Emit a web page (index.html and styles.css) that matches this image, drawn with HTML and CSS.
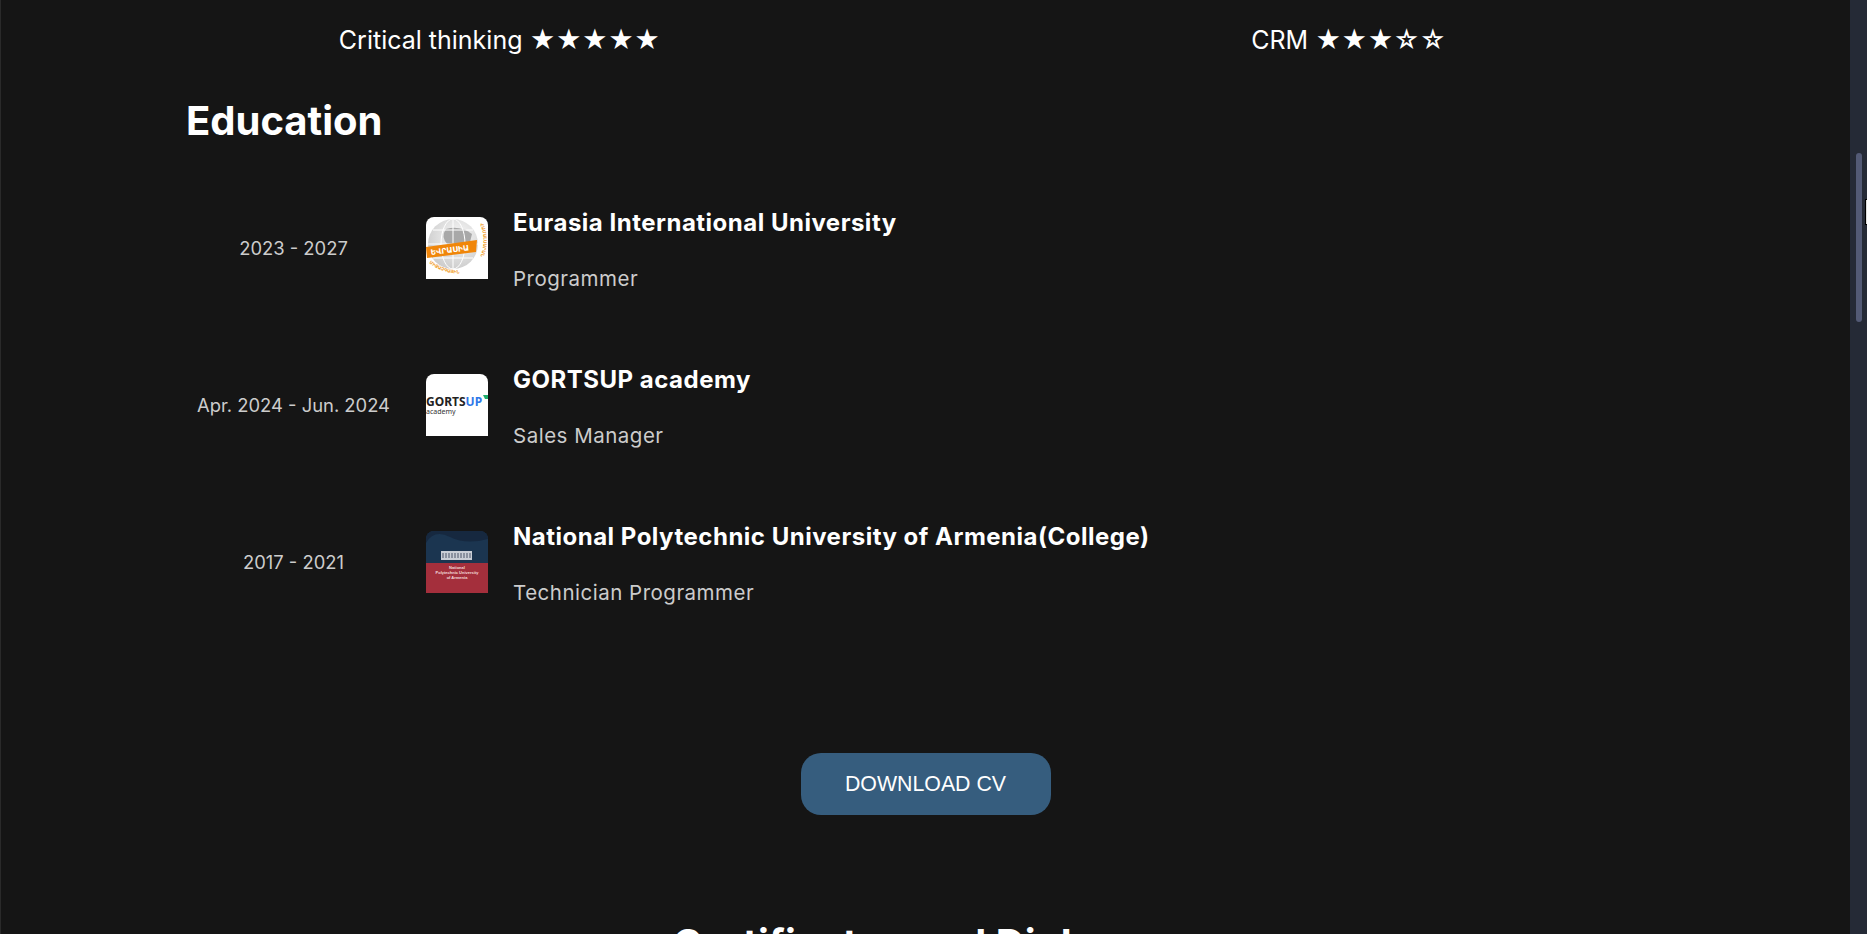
FILE: index.html
```html
<!DOCTYPE html>
<html lang="en">
<head>
    <meta charset="UTF-8">
    <meta name="viewport" content="width=device-width, initial-scale=1.0">
    <title>Resume</title>
    <link rel="stylesheet" href="styles.css">
</head>
<body>

<div class="page">
    <div class="skills">
        <div class="skill">Critical thinking ★★★★★</div>
        <div class="skill">CRM ★★★☆☆</div>
    </div>

    <div class="container">
        <h2 class="section-title">Education</h2>

        <div class="edu-row">
            <div class="edu-date">2023 - 2027</div>
            <svg class="edu-logo" viewBox="0 0 62 62">
                <defs>
                    <radialGradient id="globeFill" cx="0.6" cy="0.35" r="0.8">
                        <stop offset="0" stop-color="#f8f8f8"/>
                        <stop offset="1" stop-color="#c4c4c4"/>
                    </radialGradient>
                    <path id="arcBottom" d="M3 46 Q24 62 50 54"/>
                    <path id="arcRight" d="M54 7 Q63 28 49 50"/>
                </defs>
                <rect width="62" height="62" fill="#fff"/>
                <circle cx="27" cy="27" r="25" fill="url(#globeFill)"/>
                <path d="M20 12 Q34 8 46 17 L44 25 L22 28 Q14 20 20 12Z" fill="#a8a8a8"/>
                <ellipse cx="27" cy="27" rx="12" ry="25" fill="none" stroke="#fff"/>
                <path d="M2 27h50M7 13h40M7 41h40M27 2v50" stroke="#fff" fill="none"/>
                <path d="M0 30 L51 23 L50 35 L1 41 Z" fill="#f0860a"/>
                <text class="logo-text-arm" x="5" y="38" transform="rotate(-7 5 38)">ԵՎՐԱՍԻԱ</text>
                <text class="logo-text-arc"><textPath href="#arcBottom">ՄԻՋԱԶԳԱՅԻՆ</textPath></text>
                <text class="logo-text-arc"><textPath href="#arcRight">ՀԱՄԱԼՍԱՐԱՆ</textPath></text>
            </svg>
            <div class="edu-info">
                <h3>Eurasia International University</h3>
                <p>Programmer</p>
            </div>
        </div>

        <div class="edu-row">
            <div class="edu-date">Apr. 2024 - Jun. 2024</div>
            <svg class="edu-logo" viewBox="0 0 62 62">
                <rect width="62" height="62" fill="#fff"/>
                <path d="M57 21 L62 21 L62 25 L59 25 Z" fill="#1fae6e"/>
                <text class="logo-text-gorts" x="0" y="32">GORTS<tspan fill="#2f78e8">UP</tspan></text>
                <text class="logo-text-small" x="0" y="40">academy</text>
            </svg>
            <div class="edu-info">
                <h3>GORTSUP academy</h3>
                <p>Sales Manager</p>
            </div>
        </div>

        <div class="edu-row">
            <div class="edu-date">2017 - 2021</div>
            <svg class="edu-logo" viewBox="0 0 62 62">
                <rect width="62" height="33" fill="#1b3550"/>
                <path d="M0 0h62v8Q40 14 24 6T0 12Z" fill="#16283f"/>
                <rect y="32" width="62" height="30" fill="#a42f3c"/>
                <rect x="15" y="20" width="31" height="9" fill="#c9ced6"/>
                <path d="M17 22v5M20 22v5M23 22v5M26 22v5M29 22v5M32 22v5M35 22v5M38 22v5M41 22v5M44 22v5" stroke="#4a5568" stroke-width="1"/>
                <text class="logo-text-nat" x="31" y="38">National</text>
                <text class="logo-text-nat" x="31" y="43">Polytechnic University</text>
                <text class="logo-text-nat" x="31" y="48">of Armenia</text>
            </svg>
            <div class="edu-info">
                <h3>National Polytechnic University of Armenia(College)</h3>
                <p>Technician Programmer</p>
            </div>
        </div>

        <div class="download">
            <a class="download-btn" href="#">DOWNLOAD CV</a>
        </div>

        <h2 class="section-title centered">Certificates and Diplomas</h2>
    </div>
</div>

<div class="scrollbar">
    <div class="scrollbar-thumb"></div>
    <div class="cursor"></div>
</div>

</body>
</html>
```

FILE: styles.css
```css
html, body {
    height: 100%;
}
body {
    margin: 0;
    height: 934px;
    overflow: hidden;
    display: flex;
    background-color: #151515;
    color: #fff;
    font-family: Inter, "Liberation Sans", sans-serif;
}
.page {
    flex: 1;
    min-width: 0;
    border-left: 1px solid #2a2a2a;
}
.skills {
    display: grid;
    grid-template-columns: 849px 849px;
    padding: 20px 0 0 74px;
    height: 60px;
    box-sizing: border-box;
}
.skill {
    font-size: 25px;
    line-height: 40px;
    text-align: center;
}
.container {
    padding: 0 0 0 185px;
}
.section-title {
    margin: 37px 0 0;
    font-size: 40px;
    line-height: 48px;
    font-weight: 700;
}
.section-title.centered {
    margin: 105px 0 0;
    text-align: center;
    padding-right: 185px;
}
.edu-row {
    display: flex;
    align-items: flex-start;
    height: 157px;
}
.section-title + .edu-row {
    margin-top: 72px;
}
.edu-date {
    width: 215px;
    padding-top: 17px;
    font-size: 18.4px;
    line-height: 28px;
    color: #ccc;
    text-align: center;
}
.edu-logo {
    width: 62px;
    height: 62px;
    margin: 0 25px 0 25px;
    border-radius: 8px 8px 0 0;
}
.edu-info h3 {
    margin: -8px 0 0;
    font-size: 24px;
    line-height: 28px;
    font-weight: 700;
    letter-spacing: 0.5px;
}
.edu-info p {
    margin: 28px 0 0;
    font-size: 20.5px;
    line-height: 28px;
    color: #ccc;
    letter-spacing: 0.5px;
}
.download {
    display: flex;
    justify-content: center;
    margin-top: 65px;
    padding-right: 185px;
}
.download-btn {
    width: 250px;
    height: 62px;
    line-height: 62px;
    border-radius: 20px;
    background-color: #365d7e;
    color: #fff;
    font-family: "Liberation Sans", Arial, sans-serif;
    font-size: 21.33px;
    text-align: center;
    text-decoration: none;
}
.logo-text-arm {
    font-family: "DejaVu Sans", sans-serif;
    font-size: 7.5px;
    font-weight: 700;
    fill: #fff;
}
.logo-text-arc {
    font-family: "DejaVu Sans", sans-serif;
    font-size: 4.5px;
    font-weight: 700;
    fill: #f0a030;
}
.logo-text-gorts {
    font-family: "Noto Sans", sans-serif;
    font-size: 12px;
    font-weight: 700;
    fill: #222;
}
.logo-text-small {
    font-family: "Noto Sans", sans-serif;
    font-size: 7px;
    fill: #333;
}
.logo-text-nat {
    font-family: "Liberation Sans", sans-serif;
    font-size: 4px;
    font-weight: 700;
    fill: #f3dcdc;
    text-anchor: middle;
}
.scrollbar {
    position: relative;
    width: 17px;
    height: 100%;
    flex-shrink: 0;
    background-color: #252a36;
}
.scrollbar-thumb {
    position: absolute;
    top: 153px;
    left: 6px;
    width: 6px;
    height: 169px;
    border-radius: 3px;
    background-color: #535a75;
}
.cursor {
    position: absolute;
    top: 199px;
    right: 0;
    width: 2px;
    height: 26px;
    background-color: #ddd;
    border: 1px solid #000;
    border-right: none;
    box-sizing: border-box;
}
```
